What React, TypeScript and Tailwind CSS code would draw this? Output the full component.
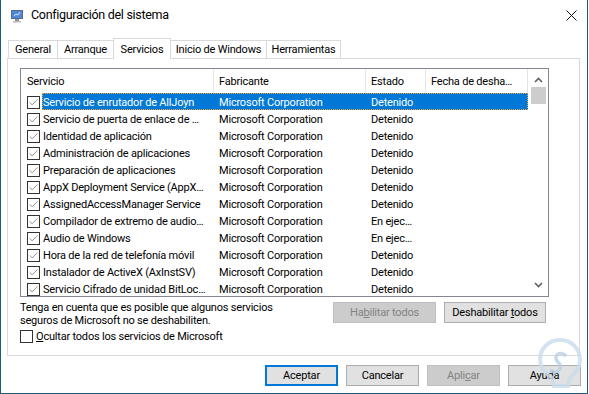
import { Check } from "lucide-react";

const rows = [
  { name: "Servicio de enrutador de AllJoyn", state: "Detenido" },
  { name: "Servicio de puerta de enlace de …", state: "Detenido" },
  { name: "Identidad de aplicación", state: "Detenido" },
  { name: "Administración de aplicaciones", state: "Detenido" },
  { name: "Preparación de aplicaciones", state: "Detenido" },
  { name: "AppX Deployment Service (AppX…", state: "Detenido" },
  { name: "AssignedAccessManager Service", state: "Detenido" },
  { name: "Compilador de extremo de audio…", state: "En ejec…" },
  { name: "Audio de Windows", state: "En ejec…" },
  { name: "Hora de la red de telefonía móvil", state: "Detenido" },
  { name: "Instalador de ActiveX (AxInstSV)", state: "Detenido" },
  { name: "Servicio Cifrado de unidad BitLoc…", state: "Detenido" },
];

function CheckBox({ checked }: { checked: boolean }) {
  return (
    <div className="w-[13px] h-[13px] border border-[#333] bg-white flex items-center justify-center shrink-0">
      {checked && <Check size={11} strokeWidth={1.4} className="text-[#555]" />}
    </div>
  );
}

function AppIcon() {
  return (
    <svg width="14" height="14" viewBox="0 0 14 14">
      <rect x="1" y="1" width="12" height="9" fill="#5a6b8a" />
      <rect x="2" y="2" width="10" height="7" fill="#4f86d8" />
      <path d="M4 7 L6 5 L8 6 L10 3" stroke="#dfe9f8" strokeWidth="1" fill="none" />
      <rect x="5" y="10" width="4" height="2" fill="#8a8f98" />
      <rect x="3" y="12" width="8" height="1.5" fill="#b8bcc4" />
    </svg>
  );
}

export default function App() {
  return (
    <div className="w-[589px] h-[394px] bg-white font-['Roboto','Liberation_Sans',sans-serif] text-[11px] tracking-[-0.2px] text-black overflow-hidden relative">
      <div className="w-[588px] h-[394px] border-x border-b border-[#1d5b7d] flex flex-col">
        {/* Title bar */}
        <div className="h-[30px] flex items-center pl-[9px] pr-[10px] pt-[1px]">
          <AppIcon />
          <span className="ml-[7px] text-[12.5px] tracking-[-0.3px] leading-none">Configuración del sistema</span>
          <svg className="ml-auto" width="11" height="11" viewBox="0 0 11 11">
            <path d="M0.5 0.5 L10.5 10.5 M10.5 0.5 L0.5 10.5" stroke="#111" strokeWidth="1" />
          </svg>
        </div>

        {/* Tabs */}
        <div className="mt-[8px] ml-[7px] h-[20px] flex items-end relative z-10 whitespace-nowrap">
          <div className="w-[50px] h-[18px] pt-[2px] border-x border-t border-[#d9d9d9] flex items-center justify-center">General</div>
          <div className="w-[57px] -ml-px h-[18px] pt-[2px] border-x border-t border-[#d9d9d9] flex items-center justify-center">Arranque</div>
          <div className="w-[58px] -ml-px h-[21px] -mb-px bg-white border-x border-t border-[#d9d9d9] flex items-start pt-[3px] justify-center">Servicios</div>
          <div className="w-[97px] -ml-px h-[18px] pt-[2px] border-x border-t border-[#d9d9d9] flex items-center justify-center">Inicio de Windows</div>
          <div className="w-[75px] -ml-px h-[18px] pt-[2px] border-x border-t border-[#d9d9d9] flex items-center justify-center">Herramientas</div>
        </div>

        {/* Panel */}
        <div className="ml-[6px] w-[573px] h-[298px] border border-[#d9d9d9] flex flex-col">
          <div className="ml-[12px] mt-[9px] w-[529px] h-[229px] border border-[#828790] flex overflow-hidden">
            <div className="w-[507px] flex flex-col">
              <div className="h-[24px] flex shrink-0">
                <div className="w-[193px] border-r border-[#e5e5e5] pl-[6px] pt-[3px] flex items-center">Servicio</div>
                <div className="w-[152px] border-r border-[#e5e5e5] pl-[5px] pt-[3px] flex items-center">Fabricante</div>
                <div className="w-[60px] border-r border-[#e5e5e5] pl-[5px] pt-[3px] flex items-center">Estado</div>
                <div className="w-[102px] border-r border-[#e5e5e5] pl-[5px] pt-[3px] flex items-center whitespace-nowrap">Fecha de desha…</div>
              </div>
              {rows.map((r, i) => (
                <div key={i} className="h-[17px] flex shrink-0">
                  <div className="w-[21px] pl-[6px] pt-[1px] flex items-center">
                    <CheckBox checked />
                  </div>
                  <div
                    className={
                      i === 0
                        ? "w-[486px] flex bg-[#0078d7] text-white outline-1 outline-dotted outline-[#f2a33a] -outline-offset-1"
                        : "w-[486px] flex"
                    }
                  >
                    <div className="w-[172px] pl-[1px] pt-[3px] flex items-center whitespace-nowrap overflow-hidden">{r.name}</div>
                    <div className="w-[152px] pl-[5px] pt-[3px] flex items-center whitespace-nowrap">Microsoft Corporation</div>
                    <div className="w-[60px] pl-[5px] pt-[3px] flex items-center whitespace-nowrap">{r.state}</div>
                    <div className="w-[102px]" />
                  </div>
                </div>
              ))}
            </div>
            {/* Scrollbar */}
            <div className="w-[20px] flex flex-col items-center">
              <svg className="mt-[8px]" width="9" height="6" viewBox="0 0 9 6">
                <path d="M1 5 L4.5 1.5 L8 5" stroke="#606060" strokeWidth="1.6" fill="none" />
              </svg>
              <div className="mt-[4px] w-[15px] h-[17px] bg-[#cdcdcd]" />
              <svg className="mt-auto mb-[8px]" width="9" height="6" viewBox="0 0 9 6">
                <path d="M1 1 L4.5 4.5 L8 1" stroke="#606060" strokeWidth="1.6" fill="none" />
              </svg>
            </div>
          </div>

          <div className="ml-[12px] w-[529px] flex">
            <div className="flex-1 flex flex-col">
              <div className="mt-[4px] leading-[13px]">
                <div>Tenga en cuenta que es posible que algunos servicios</div>
                <div>seguros de Microsoft no se deshabiliten.</div>
              </div>
              <div className="mt-[1px] flex items-center gap-[3px]">
                <CheckBox checked={false} />
                <span className="pt-[1px]">
                  <span className="underline">O</span>cultar todos los servicios de Microsoft
                </span>
              </div>
            </div>
            <div className="mt-[5px] mr-[3px] flex gap-[8px] items-start">
              <div className="w-[103px] h-[21px] pt-[1px] bg-[#cccccc] border border-[#bfbfbf] text-[#838383] flex items-center justify-center">
                <span>
                  Ha<span className="underline">b</span>ilitar todos
                </span>
              </div>
              <div className="w-[102px] h-[21px] pt-[1px] bg-[#e1e1e1] border border-[#adadad] flex items-center justify-center">
                <span>
                  Deshabilitar <span className="underline">t</span>odos
                </span>
              </div>
            </div>
          </div>
        </div>

        {/* Bottom buttons */}
        <div className="mt-[9px] flex justify-end gap-[8px] pr-[6px]">
          <div className="w-[73px] h-[21px] pt-[1px] bg-[#e1e1e1] border-2 border-[#0078d7] flex items-center justify-center">Aceptar</div>
          <div className="w-[73px] h-[21px] pt-[1px] bg-[#e1e1e1] border border-[#adadad] flex items-center justify-center">Cancelar</div>
          <div className="w-[73px] h-[21px] pt-[1px] bg-[#cccccc] border border-[#bfbfbf] text-[#838383] flex items-center justify-center">
            <span>
              Apli<span className="underline">c</span>ar
            </span>
          </div>
          <div className="w-[73px] h-[21px] pt-[1px] bg-[#e1e1e1] border border-[#adadad] flex items-center justify-center">Ayuda</div>
        </div>
      </div>

      {/* watermark */}
      <svg className="absolute left-[532px] top-[336px] pointer-events-none" width="56" height="58" viewBox="0 0 56 58">
        <path
          d="M28 4 C40 4 48 13 48 24 C48 33 42 38 38 42 L36 50 L22 50 L20 42 C14 38 8 33 8 24 C8 13 16 4 28 4 Z"
          fill="none"
          stroke="#c9dcec"
          strokeWidth="4"
          opacity="0.8"
        />
        <path d="M34 20 C28 14 20 20 26 26 C32 31 26 40 18 34" fill="none" stroke="#b9cfe4" strokeWidth="3.5" opacity="0.8" />
      </svg>
    </div>
  );
}
